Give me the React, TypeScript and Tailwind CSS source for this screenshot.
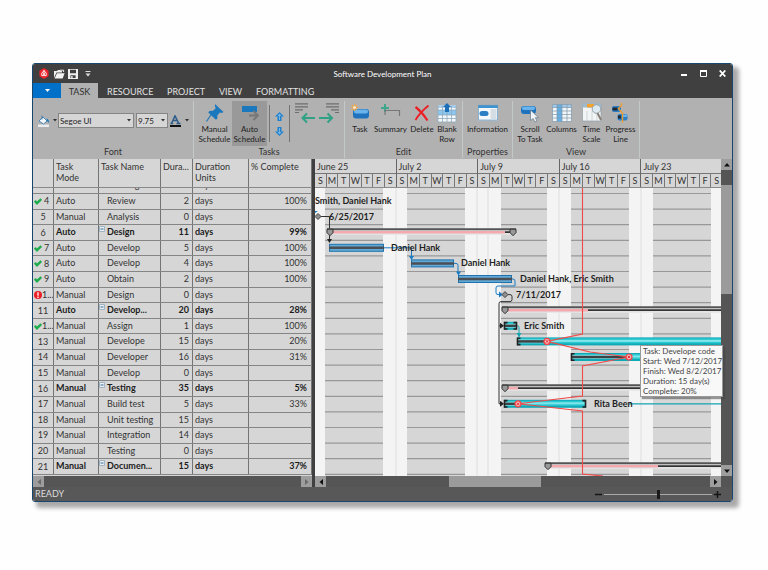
import React from "react";

const FONT = "font-[Lato,'Noto_Sans',sans-serif]";

/* ---------- data ---------- */

type Task = {
  id: string;
  mark?: "done" | "alert";
  mode: string;
  name: string;
  duration: number;
  complete?: string;
  summary?: boolean;
};

const TASKS: Task[] = [
  { id: "4", mark: "done", mode: "Auto", name: "Review", duration: 2, complete: "100%" },
  { id: "5", mode: "Manual", name: "Analysis", duration: 0 },
  { id: "6", mode: "Auto", name: "Design", duration: 11, complete: "99%", summary: true },
  { id: "7", mark: "done", mode: "Auto", name: "Develop", duration: 5, complete: "100%" },
  { id: "8", mark: "done", mode: "Auto", name: "Develop", duration: 4, complete: "100%" },
  { id: "9", mark: "done", mode: "Auto", name: "Obtain", duration: 2, complete: "100%" },
  { id: "1...", mark: "alert", mode: "Manual", name: "Design", duration: 0 },
  { id: "11", mode: "Auto", name: "Develop...", duration: 20, complete: "28%", summary: true },
  { id: "1...", mark: "done", mode: "Manual", name: "Assign", duration: 1, complete: "100%" },
  { id: "13", mode: "Manual", name: "Develope", duration: 15, complete: "20%" },
  { id: "14", mode: "Manual", name: "Developer", duration: 16, complete: "31%" },
  { id: "15", mode: "Manual", name: "Develop", duration: 0 },
  { id: "16", mode: "Manual", name: "Testing", duration: 35, complete: "5%", summary: true },
  { id: "17", mode: "Manual", name: "Build test", duration: 5, complete: "33%" },
  { id: "18", mode: "Manual", name: "Unit testing", duration: 15 },
  { id: "19", mode: "Manual", name: "Integration", duration: 14 },
  { id: "20", mode: "Manual", name: "Testing", duration: 0 },
  { id: "21", mode: "Manual", name: "Documen...", duration: 15, complete: "37%", summary: true },
];

const COLS = ["w-[21px]", "w-[45px]", "w-[62px]", "w-[32px]", "w-[56px]", "w-[63px]"];

/* ---------- title bar ---------- */

function TitleBar() {
  return (
    <header className="relative flex h-[19px] items-center bg-[#404040] px-[6px] text-white">
      <svg className="h-[11px] w-[10px]" viewBox="0 0 10 11">
        <path d="M5 0 L9.6 2.7 V8.2 L5 11 L.4 8.2 V2.7Z" fill="#e8262c" />
        <path d="M5 2.6 L2.8 5.2 V7.6 H7.2 V5.2Z M5 2 V5" fill="none" stroke="#fff" strokeWidth=".9" />
        <circle cx="5" cy="6" r="1" fill="#fff" />
      </svg>
      <button aria-label="Open" className="ml-[4px]">
        <svg className="h-[10px] w-[12px]" viewBox="0 0 12 10">
          <path d="M1 9V2h3l1-1h2l.5 1H9v1.5H3.5L1 9Z" fill="#eee" />
          <path d="M1.6 9.4 4 4.3h7.6L9.6 9.4Z" fill="#f2f2f2" />
          <path d="M7 1.2h3.6V3" fill="none" stroke="#eee" />
        </svg>
      </button>
      <button aria-label="Save" className="ml-[3px]">
        <svg className="h-[10px] w-[10px]" viewBox="0 0 10 10">
          <path d="M0 0h10v10H0Z" fill="#eee" />
          <path d="M2 .8h6v3.4H2ZM2.4 6.2h5.2V9H2.4Z" fill="#404040" />
          <path d="M3.2 7h1.4v2H3.2Z" fill="#eee" />
        </svg>
      </button>
      <button aria-label="Customize quick access" className="ml-[7px]">
        <svg className="h-[6px] w-[6px]" viewBox="0 0 6 6">
          <path d="M.5.5h5" stroke="#ddd" />
          <path d="M.5 2.5h5L3 5.5Z" fill="#ddd" />
        </svg>
      </button>
      <h1 className="pointer-events-none absolute inset-x-0 text-center text-[8px] leading-[12px] text-white">
        Software Development Plan
      </h1>
      <div className="ml-auto flex items-center gap-[12px]">
        <button aria-label="Minimize" className="mr-px">
          <svg className="h-[8px] w-[6px]" viewBox="0 0 6 8"><path d="M0 5h6" stroke="#fff" strokeWidth="2" /></svg>
        </button>
        <button aria-label="Maximize">
          <svg className="h-[7px] w-[7px]" viewBox="0 0 7 7"><path d="M.5 1.5h6v5h-6Z" fill="none" stroke="#fff" /><path d="M0 1h7" stroke="#fff" strokeWidth="2" /></svg>
        </button>
        <button aria-label="Close">
          <svg className="h-[7px] w-[7px]" viewBox="0 0 7 7"><path d="M.7.5 6.3 6.5M6.3.5.7 6.5" stroke="#fff" strokeWidth="1.8" /></svg>
        </button>
      </div>
    </header>
  );
}

function Tabs() {
  return (
    <nav className="flex h-[15px] bg-[#404040] text-[9px] leading-[17px] text-[#e0e0e0]">
      <button aria-label="File menu" className="flex w-[28px] items-center justify-center bg-[#0070c8]">
        <svg className="h-[3px] w-[5px]" viewBox="0 0 5 3"><path d="M0 0h5L2.5 3Z" fill="#fff" /></svg>
      </button>
      <button className="w-[37px] bg-[#b1b1b1] text-[#303030]">TASK</button>
      <button className="ml-[9px] w-[42px] whitespace-nowrap">RESOURCE</button>
      <button className="ml-[18px] w-[34px] whitespace-nowrap">PROJECT</button>
      <button className="ml-[18px] w-[20px] whitespace-nowrap">VIEW</button>
      <button className="ml-[17px] w-[52px] whitespace-nowrap">FORMATTING</button>
    </nav>
  );
}

/* ---------- ribbon icons ---------- */

const pin = (
  <svg className="h-[20px] w-[20px]" viewBox="0 0 20 20">
    <path d="M1.500 18.500 6.500 11" stroke="#2577b5" strokeWidth="1.2" />
    <path d="M10 1 18.500 9l-1.800 1-1.800-.6-2.600 3 .1 3.200-1.500 1.200L3.200 9.500l1.200-1.500 3.700-.2 2.600-2.600-.8-2Z" fill="#1b78bd" />
  </svg>
);
const autoSched = (
  <svg className="h-[20px] w-[20px]" viewBox="0 0 20 20">
    <path d="M2 3h15v6H2Z" fill="#1b78bd" />
    <path d="M9 12.500h8M13.500 8l4.300 4.500-4.300 4.500" fill="none" stroke="#777" strokeWidth="2" />
  </svg>
);
const taskIcon = (
  <svg className="h-[20px] w-[20px]" viewBox="0 0 20 20">
    <rect x="3" y="6" width="16" height="9.500" rx="3" fill="#1f73bd" />
    <rect x="4" y="6.500" width="14" height="4" rx="2" fill="#69b4ec" />
    <path d="M4.500 1v7M1 4.500h7M2 2l5 5M7 2 2 7" stroke="#eea650" strokeWidth="1.100" />
    <circle cx="4.500" cy="4.500" r="1.500" fill="#ffe9c0" />
  </svg>
);
const summaryIcon = (
  <svg className="h-[20px] w-[20px]" viewBox="0 0 20 20">
    <path d="M4 1v8M0 5h8" stroke="#3fa78b" strokeWidth="2" />
    <path d="M4 12V7.500h14.500V13" fill="none" stroke="#777" strokeWidth="1.200" />
  </svg>
);
const deleteIcon = (
  <svg className="h-[20px] w-[20px]" viewBox="0 0 20 20">
    <path d="M3.500 4c4 3 8 7.500 12 13.500" fill="none" stroke="#ec1f26" strokeWidth="2.200" />
    <path d="M16.500 2.500C11 7 7 11 3.500 17" fill="none" stroke="#ec1f26" strokeWidth="1.800" />
  </svg>
);
const blankRow = (
  <svg className="h-[20px] w-[20px]" viewBox="0 0 20 20">
    <path d="M1 2h18v17H1Z" fill="#f4f8fb" />
    <path d="M1 2h18v3H1Z" fill="#a9cde8" />
    <path d="M1 7h18v5H1Z" fill="#8bc6ee" />
    <path d="M1 7h18M1 12h18M1 15.500h18M5.500 3v16M10 3v16M14.500 3v16M1 3v16h18V3" fill="none" stroke="#8ea9bd" strokeWidth=".8" />
    <path d="M10 0 14 4h-2v5H8V4H6Z" fill="#1d6fb7" />
  </svg>
);
const infoIcon = (
  <svg className="h-[20px] w-[20px]" viewBox="0 0 20 20">
    <path d="M0 2h20v15.500H0Z" fill="#f5f8fa" />
    <path d="M0 2h20v3H0Z" fill="#3e93d1" />
    <path d="M.4 2.400h19.200v14.700H.4Z" fill="none" stroke="#5d96c0" strokeWidth=".8" />
    <rect x="1.500" y="8" width="9" height="5" rx="2.500" fill="#2c7fc4" />
    <path d="M12.500 7h6M12.500 9h6M12.500 11h6M12.500 13h6M12.500 15h6" stroke="#a5b5c2" strokeWidth=".8" />
  </svg>
);
const scrollTo = (
  <svg className="h-[20px] w-[20px]" viewBox="0 0 20 20">
    <rect x="1" y="3" width="15" height="8" rx="3" fill="#1f73bd" />
    <rect x="2" y="3.500" width="13" height="3.500" rx="1.700" fill="#69b4ec" />
    <path d="M10.500 7v10.500l2.700-2 1.800 3.500 2-1-1.700-3.300h3.200Z" fill="#f2f5f7" stroke="#66798a" strokeWidth=".7" />
  </svg>
);
const columnsIcon = (
  <svg className="h-[20px] w-[20px]" viewBox="0 0 20 20">
    <path d="M.5 1.500h19v17H.5Z" fill="#f2f6f9" />
    <path d="M5 1.500h5v17H5Z" fill="#62b0e8" />
    <path d="M.5 1.500h19v3H.5Z" fill="#6aaad8" opacity=".6" />
    <path d="M.5 4.500h19M.5 8h19M.5 11.500h19M.5 15h19M5 1.500v17M10 1.500v17M15 1.500v17M.5 1.500h19v17H.5Z" fill="none" stroke="#8098aa" strokeWidth=".7" />
  </svg>
);
const timeScale = (
  <svg className="h-[20px] w-[20px]" viewBox="0 0 20 20">
    <path d="M.5.5h18.500v17.500H.5Z" fill="#f3f4f4" stroke="#8f9eaa" strokeWidth=".7" />
    <path d="M.5.5h18.500v3.500H.5Z" fill="#9fb9cc" />
    <path d="M5 1h7v4H5Z" fill="#f6a32b" />
    <path d="M.5 4.500h18.500M5 8v10M10 8v10M15 8v10" stroke="#bcc8d0" strokeWidth=".7" />
    <circle cx="14.500" cy="6" r="4.300" fill="#dde9f0" stroke="#96a2aa" />
    <path d="m15.500 10 3.500 7" stroke="#87807a" strokeWidth="2" />
  </svg>
);
const progressIcon = (
  <svg className="h-[20px] w-[20px]" viewBox="0 0 20 20">
    <rect x="1" y="3" width="9" height="6" rx="2" fill="#2c7fc4" />
    <rect x="1.500" y="4.500" width="5" height="3" fill="#202832" />
    <rect x="6.500" y="11" width="10" height="6.500" rx="2" fill="#2c7fc4" />
    <rect x="11" y="11.500" width="5" height="2.500" rx="1" fill="#69b4ec" />
    <rect x="7" y="12.500" width="3" height="3" fill="#202832" />
    <path d="M10.500 0v2.500L7.500 5.500l4 5v9" fill="none" stroke="#f29b25" strokeWidth="1.300" />
  </svg>
);

function BigButton({ icon, lines, width, active }: { icon: React.ReactNode; lines: string[]; width: string; active?: boolean }) {
  return (
    <button
      className={`${width} ${active ? "bg-[#999999]" : ""} flex h-[45px] shrink-0 flex-col items-center pt-[2px] text-[8px] leading-[10px] text-[#222]`}
    >
      {icon}
      <span className="mt-px flex flex-col items-center whitespace-nowrap">
        {lines.map((l) => (
          <span key={l}>{l}</span>
        ))}
      </span>
    </button>
  );
}

function Group({ label, width, children }: { label: string; width: string; children: React.ReactNode }) {
  return (
    <section className={`${width} flex shrink-0 flex-col border-r border-[#c3c9c9]`}>
      <div className="flex h-[45px]">{children}</div>
      <div className="text-center text-[9px] leading-[12px] text-[#333]">{label}</div>
    </section>
  );
}

const caret = (
  <svg className="h-[3px] w-[4px] shrink-0" viewBox="0 0 4 3"><path d="M0 0h4L2 2.500Z" fill="#333" /></svg>
);

function FontPicker({ value, label, width }: { value: string; label: string; width: string }) {
  return (
    <div className={`${width} flex h-[15px] items-center border border-[#858585] bg-[#d6d6d6] pr-[2px]`}>
      <select aria-label={label} className="min-w-0 flex-1 appearance-none bg-transparent pl-px text-[8px] leading-[12px] text-[#222]">
        <option>{value}</option>
      </select>
      {caret}
    </div>
  );
}

function MoveArrow({ down }: { down?: boolean }) {
  return (
    <button aria-label={down ? "Move down" : "Move up"}>
      <svg className={`h-[9px] w-[9px] ${down ? "rotate-180" : ""}`} viewBox="0 0 9 9">
        <path d="M4.500 0 9 4.500H6.500V9h-4V4.500H0Z" fill="#2180cc" />
        <path d="M4.500 1.500 6.500 4H5v4H4V4H2.500Z" fill="#71b7ea" />
      </svg>
    </button>
  );
}

function Ribbon() {
  return (
    <div className="flex h-[61px] bg-[#b1b1b1] pt-[3px] pb-px">
      <Group label="Font" width="w-[161px]">
        <div className="flex h-[39px] items-center pl-[5px]">
          <button aria-label="Fill color" className="flex items-center gap-[3px]">
            <svg className="h-[12px] w-[12px]" viewBox="0 0 12 12">
              <path d="M0 9.500h11V12H0Z" fill="#e9edef" />
              <path d="M5 2 9 6 5.500 9 1 6Z" fill="#f4f7f9" stroke="#3d7fae" strokeWidth=".9" />
              <path d="M4 .5v4" stroke="#3d7fae" />
              <path d="M8.500 3.500c2 .5 2.500 2 2.500 4.500l-2-2Z" fill="#1b78bd" />
            </svg>
            {caret}
          </button>
          <div className="ml-px flex gap-[2px]">
            <FontPicker value="Segoe UI" label="Font family" width="w-[76px]" />
            <FontPicker value="9.75" label="Font size" width="w-[32px]" />
          </div>
          <button aria-label="Font color" className="ml-[2px] flex items-center gap-[4px]">
            <svg className="h-[12px] w-[11px]" viewBox="0 0 11 12">
              <path d="M0 10h11v2H0Z" fill="#111" />
              <path d="M1.500 8.500 5 .8 8.800 8.500M3 5.500h4.500M.5 8.500h2.700M6.500 8.500h4" fill="none" stroke="#2c5d8c" strokeWidth="1.500" />
            </svg>
            {caret}
          </button>
        </div>
      </Group>
      <Group label="Tasks" width="w-[151px]">
        <BigButton icon={pin} lines={["Manual", "Schedule"]} width="ml-[3px] w-[35px]" />
        <BigButton icon={autoSched} lines={["Auto", "Schedule"]} width="w-[35px]" active />
        <div className="ml-[2px] mt-[4px] flex h-[37px] w-[21px] flex-col items-center justify-center gap-[6px] border-x border-[#747474]">
          <MoveArrow />
          <MoveArrow down />
        </div>
        <div className="ml-[5px] mt-[2px] flex items-start gap-[3px]">
          <button aria-label="Outdent">
            <svg className="h-[21px] w-[21px]" viewBox="0 0 21 21">
              <path d="M0 .8h13M0 3.800h13M0 6.800h8M0 9.500h4" stroke="#6d6d6d" strokeWidth="1.200" />
              <path d="M20 15H7.500M12 10.500 7.500 15l4.500 4.500" fill="none" stroke="#2fa184" strokeWidth="2" />
            </svg>
          </button>
          <button aria-label="Indent">
            <svg className="h-[21px] w-[21px]" viewBox="0 0 21 21">
              <path d="M7 .8h13M7 3.800h13M12 6.800h8M16 9.500h4" stroke="#6d6d6d" strokeWidth="1.200" />
              <path d="M0 15h12.500M8.500 10.500 13 15l-4.500 4.500" fill="none" stroke="#2fa184" strokeWidth="2" />
            </svg>
          </button>
        </div>
      </Group>
      <Group label="Edit" width="w-[118px]">
        <BigButton icon={taskIcon} lines={["Task"]} width="ml-[3px] w-[24px]" />
        <BigButton icon={summaryIcon} lines={["Summary"]} width="w-[37px]" />
        <BigButton icon={deleteIcon} lines={["Delete"]} width="w-[26px]" />
        <BigButton icon={blankRow} lines={["Blank", "Row"]} width="w-[24px]" />
      </Group>
      <Group label="Properties" width="w-[50px]">
        <BigButton icon={infoIcon} lines={["Information"]} width="w-[49px]" />
      </Group>
      <Group label="View" width="w-[127px]">
        <BigButton icon={scrollTo} lines={["Scroll", "To Task"]} width="ml-[2px] w-[30px]" />
        <BigButton icon={columnsIcon} lines={["Columns"]} width="w-[33px]" />
        <BigButton icon={timeScale} lines={["Time", "Scale"]} width="w-[27px]" />
        <BigButton icon={progressIcon} lines={["Progress", "Line"]} width="w-[31px]" />
      </Group>
    </div>
  );
}

/* ---------- scroll bars ---------- */

type Dir = "left" | "right" | "up" | "down";
const ARROWS: Record<Dir, string> = {
  left: "M5 0v6L1.500 3Z",
  right: "M1 0v6L4.500 3Z",
  up: "M0 4.500h6L3 1Z",
  down: "M0 1.500h6L3 5Z",
};

function ScrollButton({ dir, dim }: { dir: Dir; dim?: boolean }) {
  return (
    <button aria-label={`Scroll ${dir}`} className="flex h-[11px] w-[11px] shrink-0 items-center justify-center bg-[#9d9d9d]">
      <svg className="h-[6px] w-[6px]" viewBox="0 0 6 6"><path d={ARROWS[dir]} fill={dim ? "#6a6a6a" : "#111"} /></svg>
    </button>
  );
}

/* ---------- task table ---------- */

function Mark({ kind }: { kind: "done" | "alert" }) {
  return kind === "done" ? (
    <svg className="h-[7px] w-[8px] shrink-0" viewBox="0 0 8 7"><path d="M.8 2.800 3 5.200 7.300 1" fill="none" stroke="#1eab4c" strokeWidth="2.400" /></svg>
  ) : (
    <svg className="h-[8px] w-[8px] shrink-0" viewBox="0 0 8 8"><circle cx="4" cy="4" r="4" fill="#ec1f26" /><path d="M4 1.200v3.600M4 5.600v1.400" stroke="#fff" strokeWidth="1.300" /></svg>
  );
}

function TaskTable() {
  const cell = "shrink-0 overflow-hidden whitespace-nowrap border-r border-[#747474]";
  return (
    <div className="flex w-[279px] shrink-0 flex-col bg-[#d6d6d6]">
      <table className="block h-[317px] overflow-hidden text-[9px] text-[#333]">
        <thead className="block">
          <tr className="flex h-[29px] border-b border-[#8a8a8a] text-left leading-[11px]">
            {["", "Task Mode", "Task Name", "Dura...", "Duration Units", "% Complete"].map((h, i) => (
              <th key={i} className={`${COLS[i]} ${i === 1 ? "pr-[10px]" : ""} ${i === 4 ? "pr-[8px]" : ""} shrink-0 border-r border-[#747474] pt-[2px] pl-[2px] font-normal`}>{h}</th>
            ))}
          </tr>
        </thead>
        <tbody className="block">
          <tr className="flex h-[6px] items-end border-b border-[#858585] leading-[16px]">
            <td className={`${COLS[0]} ${cell} h-[5px]`} />
            <td className={`${COLS[1]} ${cell} h-[5px]`} />
            <td className={`${COLS[2]} ${cell} flex h-[5px] items-end pl-[8px]`}>Drafting</td>
            <td className={`${COLS[3]} ${cell} h-[5px]`} />
            <td className={`${COLS[4]} ${cell} flex h-[5px] items-end pl-[2px]`}>days</td>
            <td className={`${COLS[5]} ${cell} h-[5px]`} />
          </tr>
        </tbody>
        <tbody className="flex h-[281px] flex-col">
          {TASKS.map((t, i) => {
            const w = t.summary ? "font-bold text-[#1c1c1c]" : "";
            return (
              <tr key={i} className="flex flex-1 border-b border-[#858585] leading-[14px]">
                <td className={`${COLS[0]} ${cell} flex items-center ${t.mark ? "pl-px" : "justify-center"}`}>
                  {t.mark && <Mark kind={t.mark} />}
                  <span className={t.mark && t.id.length < 2 ? "ml-[2px]" : ""}>{t.id}</span>
                </td>
                <td className={`${COLS[1]} ${cell} ${w} pl-[2px]`}>{t.mode}</td>
                <td className={`${COLS[2]} ${cell} ${w} flex`}>
                  <span className="w-[8px] shrink-0 pt-px">
                    {t.summary && (
                      <svg className="h-[6px] w-[6px]" viewBox="0 0 6 6"><path d="M.5.5h5v5h-5Z" fill="#eee" stroke="#8fa9bd" strokeWidth=".8" /><path d="M1.500 3h3" stroke="#2b6ea5" /></svg>
                    )}
                  </span>
                  <span>{t.name}</span>
                </td>
                <td className={`${COLS[3]} ${cell} ${w} pr-[3px] text-right`}>{t.duration}</td>
                <td className={`${COLS[4]} ${cell} ${w} pl-[2px]`}>days</td>
                <td className={`${COLS[5]} ${cell} ${w} pr-[4px] text-right`}>{t.complete}</td>
              </tr>
            );
          })}
        </tbody>
      </table>
      <div className="flex justify-between bg-[#555]">
        <ScrollButton dir="left" dim />
        <ScrollButton dir="right" dim />
      </div>
    </div>
  );
}

/* ---------- gantt chart ---------- */

/* Rows are 15.6 units tall; the first full row is task 4. */
const rowY = (id: number) => 13 + (id - 4) * 15.6;

const WEEKENDS = [
  [0, 10], [68, 92], [150, 186], [232, 256], [314, 338], [396, 420],
];
const WEEK_LINES = [81, 162, 173, 244, 326];

function Summary({ id, x, end, pink, closed }: { id: number; x: number; end: number; pink: number; closed?: boolean }) {
  const y = rowY(id);
  return (
    <g>
      <path d={`M${x} ${y - 3.500}H${end}v6H${x}Z`} fill="#e4e4e4" />
      <path d={`M${x} ${y - 3}H${end}`} stroke="#555" strokeWidth="2" />
      <path d={`M${x + 2} ${y}H${pink}`} stroke="#f3a9ae" strokeWidth="2.500" />
      <path d={`M${pink} ${y}H${end}`} stroke="#333" strokeWidth="1.800" />
      <path d={`M${x} ${y - 3}h6v3.500l-3 3-3-3Z`} fill="#999" stroke="#333" />
      {closed && <path d={`M${end - 6} ${y - 3}h6v3.500l-3 3-3-3Z`} fill="#999" stroke="#333" />}
    </g>
  );
}

function BlueBar({ id, x, end }: { id: number; x: number; end: number }) {
  const y = rowY(id);
  return (
    <g>
      <rect x={x + 0.5} y={y - 3.5} width={end - x - 1} height="7" fill="#62a9d6" stroke="#1f72ae" />
      <path d={`M${x} ${y}H${end}`} stroke="#4a4f55" strokeWidth="2.500" />
    </g>
  );
}

function TealBar({ id, x, end, done }: { id: number; x: number; end: number; done: number }) {
  const y = rowY(id);
  return (
    <g>
      <rect x={x} y={y - 4} width={end - x} height="8" fill="#10a9b6" />
      <rect x={x} y={y - 3} width={end - x} height="5" fill="#2cc8d2" />
      <rect x={x} y={y - 1.5} width={end - x} height="2" fill="#7fe6ea" />
      <path d={`M${x} ${y}H${done}`} stroke="#fff" strokeWidth="4" opacity=".35" />
      <path d={`M${x} ${y}H${done}`} stroke="#3b4144" strokeWidth="2.500" />
      <path d={`M${x + 3.500} ${y - 3.200}h-3v6.400h3`} fill="none" stroke="#222" strokeWidth="1.600" />
    </g>
  );
}

const diamond = (x: number, y: number) => (
  <path d={`M${x} ${y - 3}l3 3-3 3-3-3Z`} fill="#8f8f8f" stroke="#444" />
);
const endCap = (x: number, id: number) => (
  <path d={`M${x - 3.500} ${rowY(id) - 3.200}h3v6.400h-3`} fill="none" stroke="#222" strokeWidth="1.600" />
);
const downArrow = (x: number, y: number, c: string) => <path d={`M${x - 2.500} ${y - 3}h5l-2.500 4Z`} fill={c} />;
const rightArrow = (x: number, y: number, c: string) => <path d={`M${x - 4} ${y - 3}v6l4-3Z`} fill={c} />;
const warn = (x: number, id: number) => (
  <g>
    <circle cx={x} cy={rowY(id)} r="3" fill="#f6b3b3" stroke="#f0444a" strokeWidth="1.200" />
    <path d={`M${x - 1.200} ${rowY(id) - 1.200}l2.400 2.400m0-2.400l-2.400 2.400`} stroke="#e8262c" strokeWidth=".9" />
  </g>
);

function ChartBody() {
  const lines = Array.from({ length: 19 }, (_, i) => 5.5 + i * 15.6);
  const label = (x: number, id: number, t: string) => (
    <text x={x} y={rowY(id) + 3} fill="#1f1f1f" fontSize="9" fontWeight="700">{t}</text>
  );
  const blue = "#1b7cc4";
  const teal = "#14a3b0";
  return (
    <svg className="block h-[288px] w-full" role="img" aria-label="Gantt chart">
      <rect width="100%" height="100%" fill="#d6d6d6" />
      {lines.map((y) => <line key={y} x1="0" x2="100%" y1={y} y2={y} stroke="#989898" strokeWidth="1.200" />)}
      {WEEKENDS.map(([a, b]) => <rect key={a} x={a} width={b - a} height="100%" fill="#f4f4f4" />)}
      {WEEK_LINES.map((x) => <line key={x} x1={x} x2={x} y1="0" y2="100%" stroke="#dedede" />)}

      {/* dependency links */}
      <g fill="none" strokeWidth="1">
        <path d={`M5 28.500H14.500V52`} stroke="#333" />
        <path d={`M68 ${rowY(7)}H96.500V71`} stroke={blue} />
        <path d={`M139 ${rowY(8)}h2q2 0 2 2V86`} stroke={blue} />
        <path d={`M197 91h1q2 0 2 2v5q0 0-2 0H183q-2 0-2 2v4.600q0 2 2 2h3`} stroke={blue} />
        <path d={`M193 ${rowY(10)}h2q2 0 2 2v3q0 2-2 2h-9q-2 0-2 2V${rowY(17)}h4M184 ${rowY(12)}h4`} stroke="#333" />
        <path d={`M202 ${rowY(12)}h1q1 0 1 2V149`} stroke={teal} />
        <path d={`M314 ${rowY(17)}H420`} stroke={teal} strokeWidth="1.300" />
      </g>
      {downArrow(14.5, 54, "#222")}
      {downArrow(96.5, 71, blue)}
      {downArrow(143.5, 86.5, blue)}
      {rightArrow(188, rowY(10), blue)}
      {rightArrow(189, rowY(12), "#222")}
      {rightArrow(189, rowY(17), "#222")}
      {downArrow(204, 148, teal)}
      <path d="M0 23h3l-3 2Z" fill={blue} />

      {diamond(3, 28.5)}
      {diamond(190, rowY(10))}
      <Summary id={6} x={12} end={201} pink={190} closed />
      <Summary id={11} x={187} end={420} pink={273} />
      <Summary id={16} x={187} end={420} pink={203} />
      <Summary id={21} x={230} end={420} pink={343} />
      <BlueBar id={7} x={14} end={69} />
      <BlueBar id={8} x={96} end={139} />
      <BlueBar id={9} x={143} end={197} />
      <TealBar id={12} x={189} end={202} done={202} />
      {endCap(202, 12)}
      <TealBar id={13} x={202} end={420} done={231} />
      <TealBar id={14} x={256} end={420} done={312} />
      <TealBar id={17} x={189} end={271} done={203} />
      {endCap(271, 17)}

      <path
        d={`M267.500 0V146L232 ${rowY(13)}L275 164L314 ${rowY(14)}L267.500 178V208L203 ${rowY(17)}L267.500 223V286L288 288`}
        fill="none" stroke="#f04a48" strokeWidth="1.100"
      />
      {warn(232, 13)}
      {warn(314, 14)}
      {warn(203, 17)}

      {label(0, 4, "Smith, Daniel Hank")}
      {label(14, 5, "6/25/2017")}
      {label(76, 7, "Daniel Hank")}
      {label(146, 8, "Daniel Hank")}
      {label(205, 9, "Daniel Hank, Eric Smith")}
      {label(201, 10, "7/11/2017")}
      {label(209, 12, "Eric Smith")}
      {label(279, 17, "Rita Been")}
    </svg>
  );
}

function Chart() {
  return (
    <div className="relative flex min-w-0 flex-1 flex-col">
      <div className="h-[29px] overflow-hidden border-b border-[#8a8a8a] bg-[#d6d6d6] text-[9px] text-[#333]">
        <div className="flex w-[408px]">
          {["June 25", "July 2", "July 9", "July 16", "July 23"].map((w) => (
            <div key={w} className="flex-1 border-r border-[#666]">
              <div className="h-[15px] border-b border-[#777] pl-[2px] leading-[15px]">{w}</div>
              <div className="flex h-[13px] text-center leading-[14px]">
                {["S", "M", "T", "W", "T", "F", "S"].map((d, i) => (
                  <div key={i} className="min-w-0 flex-1 border-r border-[#777] last:border-r-0">{d}</div>
                ))}
              </div>
            </div>
          ))}
        </div>
      </div>
      <ChartBody />
      <div className="flex h-[11px] bg-[#555]">
        <ScrollButton dir="left" />
        <div className="ml-[123px] w-[92px] bg-[#9b9b9b]" />
        <div className="ml-auto flex"><ScrollButton dir="right" /></div>
      </div>
      <div
        role="tooltip"
        className="absolute top-[186px] left-[325px] w-[83px] border border-[#999] bg-[#f8f8f8] pl-[2px] text-[8px] leading-[10px] whitespace-nowrap text-[#444] shadow-[2px_2px_1px_#4448]"
      >
        <p>Task: Develope code</p>
        <p>Start: Wed 7/12/2017</p>
        <p>Finish: Wed 8/2/2017</p>
        <p>Duration: 15 day(s)</p>
        <p>Complete: 20%</p>
      </div>
    </div>
  );
}

/* ---------- page ---------- */

export default function App() {
  return (
    <main className={`${FONT} min-h-screen bg-[#fefefe] pt-[63px] pr-[35px] pl-[32px]`}>
      <div className="overflow-hidden rounded-[3px] border border-[#17476e] shadow-[5px_5px_4px_1px_#0005]">
        <TitleBar />
        <Tabs />
        <Ribbon />
        <div className="flex">
          <TaskTable />
          <div className="w-[3px] shrink-0 bg-[#404040]" />
          <Chart />
          <div className="flex w-[11px] shrink-0 flex-col bg-[#555]">
            <ScrollButton dir="up" />
            <div className="mt-[15px] h-[109px] bg-[#9b9b9b]" />
            <div className="mt-auto mb-[11px]"><ScrollButton dir="down" /></div>
          </div>
        </div>
        <footer className="flex h-[14px] items-center bg-[#585858] pr-[11px] pl-[2px] text-[9px] text-[#ddd]">
          <span>READY</span>
          <button aria-label="Zoom out" className="ml-auto">
            <svg className="h-[7px] w-[7px]" viewBox="0 0 7 7"><path d="M0 3.500h7" stroke="#151515" strokeWidth="1.500" /></svg>
          </button>
          <input
            type="range"
            aria-label="Zoom"
            defaultValue={50}
            className="mx-[2px] h-[9px] w-[108px] appearance-none bg-[linear-gradient(#aaa,#aaa)] bg-[length:100%_1px] bg-center bg-no-repeat [&::-webkit-slider-thumb]:h-[9px] [&::-webkit-slider-thumb]:w-[3px] [&::-webkit-slider-thumb]:appearance-none [&::-webkit-slider-thumb]:bg-[#1a1a1a]"
          />
          <button aria-label="Zoom in">
            <svg className="h-[7px] w-[7px]" viewBox="0 0 7 7"><path d="M0 3.500h7M3.500 0v7" stroke="#151515" strokeWidth="1.500" /></svg>
          </button>
        </footer>
      </div>
    </main>
  );
}
